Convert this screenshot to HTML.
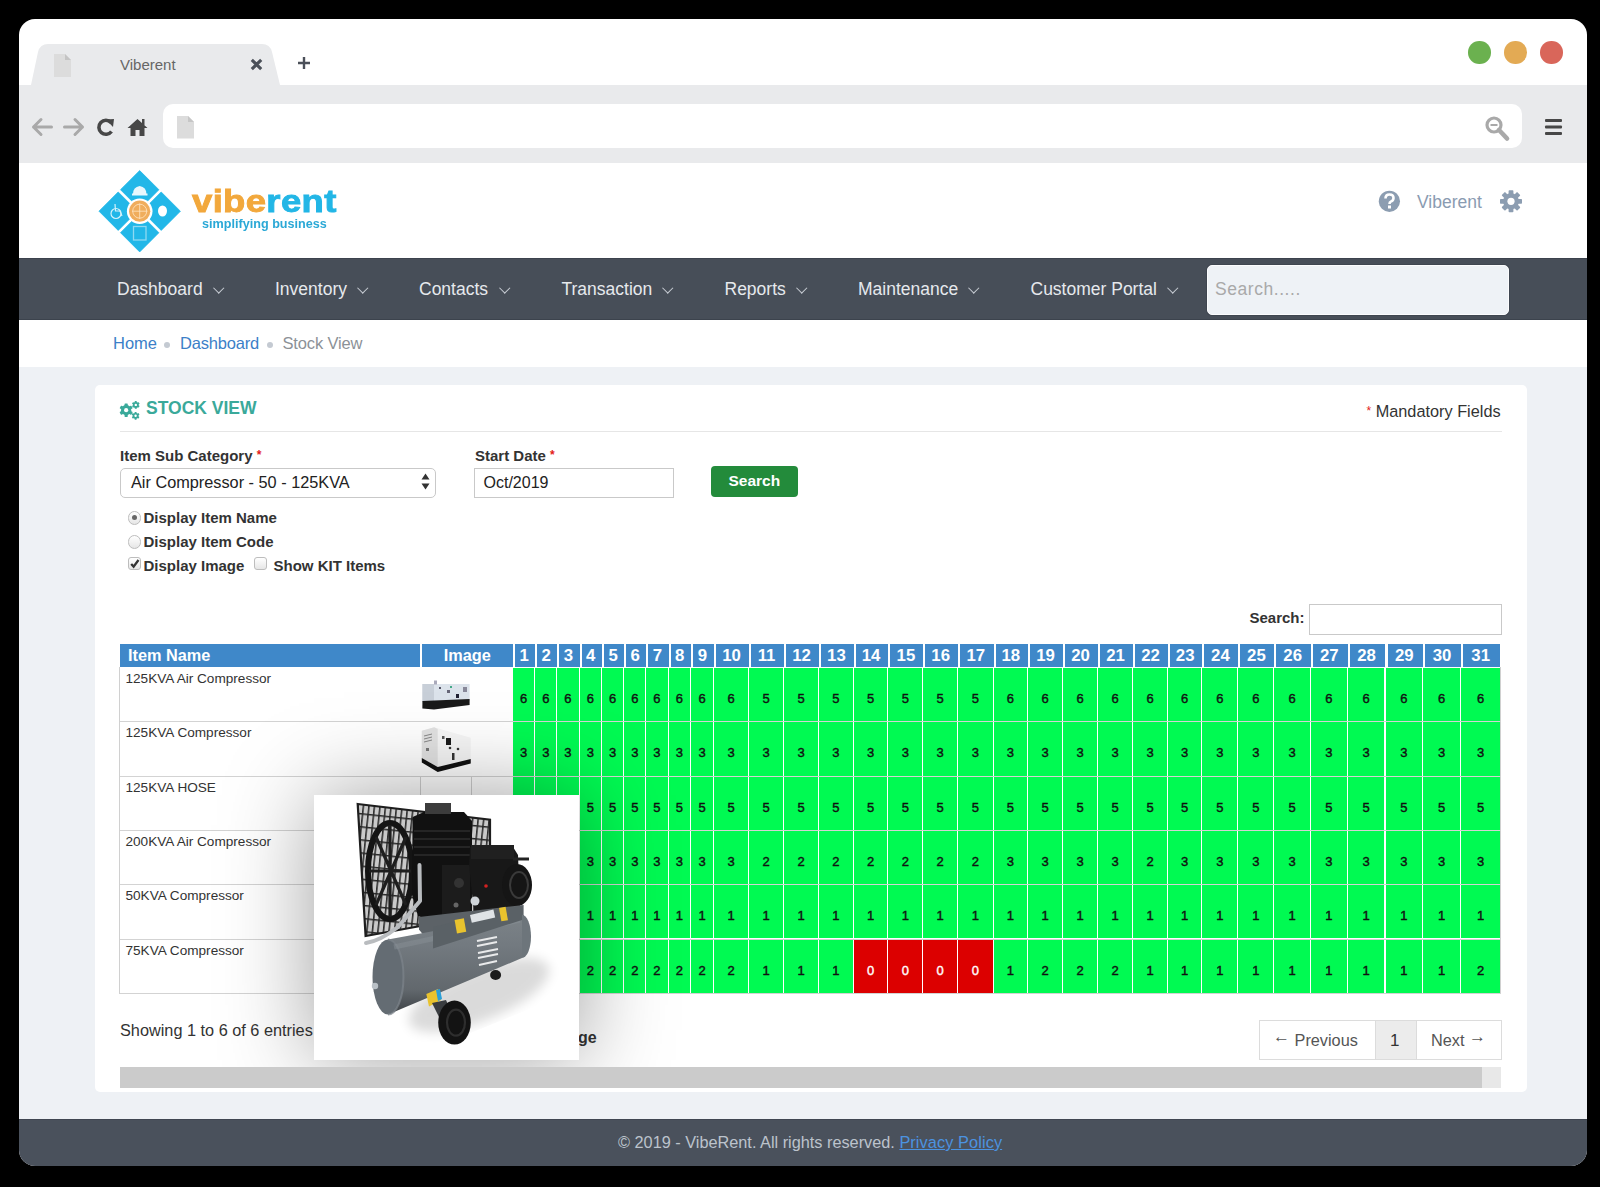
<!DOCTYPE html>
<html><head><meta charset="utf-8">
<style>
*{margin:0;padding:0;box-sizing:border-box}
html,body{width:1600px;height:1187px;overflow:hidden;background:#000;font-family:"Liberation Sans",sans-serif}
.abs{position:absolute}
#win{position:absolute;left:19px;top:19px;width:1568px;height:1147px;background:#fff;border-radius:16px;overflow:hidden}
/* everything inside positioned relative to page: use page coordinates via wrapper */
#pg{position:absolute;left:-19px;top:-19px;width:1600px;height:1187px}
.t{position:absolute;white-space:nowrap}
#toolbar{position:absolute;left:0;top:85px;width:1600px;height:78px;background:#e9eaec}
#addr{position:absolute;left:163px;top:104px;width:1359px;height:44px;background:#fff;border-radius:10px}
#nav{position:absolute;left:0;top:258px;width:1600px;height:62px;background:#474e58;border-top:1.5px solid #3c434d;border-bottom:1.5px solid #3c434d}
.nv{position:absolute;top:279px;font-size:17.5px;color:#e6e9ed;line-height:20px}
.chev{position:absolute;top:284.3px;width:7.5px;height:7.5px;border-right:1.5px solid #c9ced5;border-bottom:1.5px solid #c9ced5;transform:rotate(45deg)}
#content{position:absolute;left:0;top:367px;width:1600px;height:752px;background:#eef1f5}
#panel{position:absolute;left:95px;top:385px;width:1432px;height:707px;background:#fff;border-radius:5px}
#footer{position:absolute;left:0;top:1119px;width:1600px;height:47px;background:#4a515c;border-top:1.5px solid #3f4651}
.lbl{position:absolute;font-size:15px;font-weight:bold;color:#333;line-height:18px}
.req{color:#e31b1b;font-size:12px;position:relative;top:-2px}
.th{position:absolute;top:644px;height:23px;background:#3f88c9;color:#fff;font-weight:bold;font-size:16.8px;line-height:23px}
.td{position:absolute;background:#00fa52;color:#111;font-size:13px;text-align:center;-webkit-text-stroke:0.4px #111}
.td.r{background:#dc0000;color:#fff;-webkit-text-stroke:0.4px #fff}
.hl{position:absolute;left:120px;width:1381px;height:1px;background:#d3d3d3}
.nm{position:absolute;left:125.5px;font-size:13.6px;color:#333;line-height:16px}
</style></head><body>
<div id="win"><div id="pg">
  <!-- tab -->
  <svg class="abs" style="left:0;top:0" width="340" height="90">
    <path d="M31 85 L38 52 Q40 44 48 44 L262 44 Q270 44 272 52 L280 85 Z" fill="#e9eaec"/>
    <path d="M54 54 L65 54 L71 60 L71 77 L54 77 Z" fill="#dcdcdc"/>
    <path d="M65 54 L71 60 L65 60 Z" fill="#c4c4c4"/>
    <path d="M251.8 59.8 L261.2 69.2 M261.2 59.8 L251.8 69.2" stroke="#4b5059" stroke-width="3.1"/>
    <path d="M304 57 L304 69 M298 63 L310 63" stroke="#4b5059" stroke-width="2.4"/>
  </svg>
  <div class="t" style="left:120px;top:56px;font-size:15px;color:#666;line-height:18px">Viberent</div>
  <!-- traffic lights -->
  <div class="abs" style="left:1468px;top:41px;width:22.5px;height:22.5px;border-radius:50%;background:#6bb14f"></div>
  <div class="abs" style="left:1504px;top:41px;width:22.5px;height:22.5px;border-radius:50%;background:#e3aa54"></div>
  <div class="abs" style="left:1540px;top:41px;width:22.5px;height:22.5px;border-radius:50%;background:#d9665a"></div>
  <!-- toolbar -->
  <div id="toolbar"></div>
  <div id="addr"></div>
  <svg class="abs" style="left:0;top:100px" width="220" height="50">
    <!-- back -->
    <path d="M33.5 27 L51.5 27 M41 19.5 L33.5 27 L41 34.5" fill="none" stroke="#a9a9a9" stroke-width="3" stroke-linecap="round" stroke-linejoin="round"/>
    <!-- forward -->
    <path d="M64.5 27 L82.5 27 M75 19.5 L82.5 27 L75 34.5" fill="none" stroke="#a9a9a9" stroke-width="3" stroke-linecap="round" stroke-linejoin="round"/>
    <!-- reload -->
    <path d="M111 22.5 A7 7 0 1 0 111.5 31.5" fill="none" stroke="#474747" stroke-width="3.6"/>
    <path d="M106 19.5 L114 19 L113 27 Z" fill="#474747"/>
    <!-- home -->
    <path d="M127.5 28 L137.5 19 L147.5 28 L144.5 28 L144.5 36 L139.5 36 L139.5 30 L135.5 30 L135.5 36 L130.5 36 L130.5 28 Z" fill="#474747"/>
    <rect x="142" y="19" width="2.5" height="6" fill="#474747"/>
    <!-- file -->
    <path d="M177 16 L188 16 L194 22 L194 38.5 L177 38.5 Z" fill="#dcdcdc"/>
    <path d="M188 16 L194 22 L188 22 Z" fill="#c6c6c6"/>
  </svg>
  <svg class="abs" style="left:1470px;top:100px" width="110" height="50">
    <circle cx="24" cy="25" r="7" fill="none" stroke="#a9a9a9" stroke-width="3.2"/>
    <path d="M20.5 25 L27.5 25" stroke="#a9a9a9" stroke-width="2"/>
    <path d="M29 30 L37 38.5" stroke="#a9a9a9" stroke-width="4.6" stroke-linecap="round"/>
    <rect x="75" y="19" width="17" height="3" rx="1" fill="#474747"/>
    <rect x="75" y="25.5" width="17" height="3" rx="1" fill="#474747"/>
    <rect x="75" y="32" width="17" height="3" rx="1" fill="#474747"/>
  </svg>

  <!-- header logo -->
  <svg class="abs" style="left:90px;top:165px" width="100" height="95" viewBox="90 165 100 95">
    <g fill="#22b7e8" stroke="#22b7e8" stroke-width="0.8" stroke-linejoin="round">
      <path d="M139.7 170.6 L158.9 189.7 L139.7 208.9 L120.5 189.7 Z"/>
      <path d="M99 211.2 L118.2 192 L137.4 211.2 L118.2 230.4 Z"/>
      <path d="M180.4 211.2 L161.2 192 L142 211.2 L161.2 230.4 Z"/>
      <path d="M139.7 251.9 L158.9 232.7 L139.7 213.5 L120.5 232.7 Z"/>
    </g>
    <circle cx="139.7" cy="211.2" r="12.8" fill="#fff"/>
    <circle cx="139.7" cy="211.2" r="10.6" fill="#f0ad5c"/>
    <g fill="none" stroke="#ffe6c4" stroke-width="0.8">
      <circle cx="139.7" cy="211.2" r="7"/>
      <path d="M132 211.2 L147.4 211.2 M139.7 203.5 L139.7 219"/>
    </g>
    <path d="M133 194 Q133 187 139.7 186 Q146.4 187 146.4 194 Z" fill="#e8f7fd"/>
    <rect x="132" y="193.5" width="15.5" height="2" fill="#e8f7fd"/>
    <ellipse cx="162.5" cy="211" rx="4.5" ry="5.5" fill="#fff"/>
    <circle cx="116" cy="213.5" r="5" fill="none" stroke="#d6f2fb" stroke-width="1.2"/>
    <path d="M115 204 L115.5 211 L120 211 L122 216" fill="none" stroke="#d6f2fb" stroke-width="1.2"/>
    <rect x="133.5" y="226.5" width="12.5" height="13.5" fill="none" stroke="#8fd9f2" stroke-width="1.3"/>
  </svg>
  <div class="t" style="left:191.5px;top:180.6px;font-size:32px;font-weight:bold;letter-spacing:0.3px;line-height:40px;transform:scaleX(1.14);transform-origin:0 0"><span style="color:#f2a83c;-webkit-text-stroke:0.9px #f2a83c">vibe</span><span style="color:#22b6e6;-webkit-text-stroke:0.9px #22b6e6">rent</span></div>
  <div class="t" style="left:201.75px;top:216.8px;font-size:13.5px;font-weight:bold;color:#2aa8d6;line-height:14px;transform:scaleX(0.935);transform-origin:0 0">simplifying business</div>

  <!-- header right -->
  <svg class="abs" style="left:1375px;top:188px" width="160" height="28">
    <circle cx="14.4" cy="13.3" r="10.6" fill="#8c9db1"/>
    <path d="M10.5 10.5 Q10.5 6.5 14.5 6.5 Q18.5 6.5 18.5 10 Q18.5 12.5 15.8 13.6 Q14.5 14.2 14.5 16" fill="none" stroke="#fff" stroke-width="2.6"/>
    <rect x="13" y="17.5" width="3" height="3" fill="#fff"/>
    <g transform="translate(136,13.3)" fill="#8c9db1">
      <circle r="8"/>
      <g id="teeth">
        <rect x="-2.4" y="-11" width="4.8" height="22" rx="0.8"/>
        <rect x="-2.4" y="-11" width="4.8" height="22" rx="0.8" transform="rotate(45)"/>
        <rect x="-2.4" y="-11" width="4.8" height="22" rx="0.8" transform="rotate(90)"/>
        <rect x="-2.4" y="-11" width="4.8" height="22" rx="0.8" transform="rotate(135)"/>
      </g>
      <circle r="3.6" fill="#fff"/>
    </g>
  </svg>
  <div class="t" style="left:1417px;top:192px;font-size:17.5px;color:#8a9bb1;line-height:20px">Viberent</div>

  <!-- nav -->
  <div id="nav"></div>
  <div class="nv" style="left:117px">Dashboard</div><div class="chev" style="left:215.3px"></div>
  <div class="nv" style="left:275px">Inventory</div><div class="chev" style="left:358.8px"></div>
  <div class="nv" style="left:419px">Contacts</div><div class="chev" style="left:500.8px"></div>
  <div class="nv" style="left:561.5px">Transaction</div><div class="chev" style="left:663.8px"></div>
  <div class="nv" style="left:724.5px">Reports</div><div class="chev" style="left:797.8px"></div>
  <div class="nv" style="left:858px">Maintenance</div><div class="chev" style="left:970.3px"></div>
  <div class="nv" style="left:1030.5px">Customer Portal</div><div class="chev" style="left:1168.8px"></div>
  <div class="abs" style="left:1207px;top:265px;width:302px;height:50px;background:#eef2f6;border-radius:5px;border:1.5px solid #fbfcfd;box-shadow:0 0 0 1px #3f4650"></div>
  <div class="t" style="left:1215px;top:279px;font-size:17.5px;letter-spacing:0.55px;color:#a9a9a9;line-height:20px">Search.....</div>

  <!-- breadcrumb -->
  <div class="t" style="left:113px;top:334px;font-size:16.5px;color:#3c7fc8;line-height:19px">Home</div>
  <div class="abs" style="left:164px;top:342.2px;width:6px;height:6px;border-radius:50%;background:#c4cad2"></div>
  <div class="t" style="left:180px;top:334px;letter-spacing:-0.2px;font-size:16.5px;color:#3c7fc8;line-height:19px">Dashboard</div>
  <div class="abs" style="left:266.5px;top:342.2px;width:6px;height:6px;border-radius:50%;background:#c4cad2"></div>
  <div class="t" style="left:282.5px;top:334px;letter-spacing:-0.15px;font-size:16.5px;color:#8c9197;line-height:19px">Stock View</div>

  <div id="content"></div>
  <div id="panel"></div>

  <!-- panel title -->
  <svg class="abs" style="left:118px;top:399px" width="26" height="24">
    <g fill="#3aa99a" transform="translate(8.15,11.2)">
      <circle r="5.1"/>
      <rect x="-1.6" y="-6.7" width="3.2" height="13.4" rx="0.6"/>
      <rect x="-1.6" y="-6.7" width="3.2" height="13.4" rx="0.6" transform="rotate(60)"/>
      <rect x="-1.6" y="-6.7" width="3.2" height="13.4" rx="0.6" transform="rotate(120)"/>
      <circle r="2.1" fill="#fff"/>
    </g>
    <g fill="#3aa99a" transform="translate(17.8,5.9)">
      <circle r="2.9"/>
      <rect x="-1" y="-3.9" width="2" height="7.8" rx="0.4"/>
      <rect x="-1" y="-3.9" width="2" height="7.8" rx="0.4" transform="rotate(60)"/>
      <rect x="-1" y="-3.9" width="2" height="7.8" rx="0.4" transform="rotate(120)"/>
      <circle r="1.2" fill="#fff"/>
    </g>
    <g fill="#3aa99a" transform="translate(17.6,16.8)">
      <circle r="2.9"/>
      <rect x="-1" y="-3.9" width="2" height="7.8" rx="0.4"/>
      <rect x="-1" y="-3.9" width="2" height="7.8" rx="0.4" transform="rotate(60)"/>
      <rect x="-1" y="-3.9" width="2" height="7.8" rx="0.4" transform="rotate(120)"/>
      <circle r="1.2" fill="#fff"/>
    </g>
  </svg>
  <div class="t" style="left:146px;top:398px;font-size:17.5px;font-weight:bold;color:#3aa99a;line-height:20px">STOCK VIEW</div>
  <div class="t" style="left:1366.5px;top:402px;font-size:16.3px;color:#333;line-height:19px"><span class="req">*</span> Mandatory Fields</div>
  <div class="abs" style="left:120px;top:431px;width:1382px;height:1px;background:#e6e6e6"></div>

  <!-- form -->
  <div class="lbl" style="left:120px;top:447px">Item Sub Category <span class="req">*</span></div>
  <div class="abs" style="left:120px;top:467.5px;width:316px;height:30px;border:1px solid #c9c9c9;border-radius:5px;background:#fff"></div>
  <div class="t" style="left:131px;top:473px;font-size:16.3px;color:#222;line-height:19px">Air Compressor - 50 - 125KVA</div>
  <svg class="abs" style="left:420px;top:472px" width="12" height="20">
    <path d="M1.5 7.5 L5.5 1.5 L9.5 7.5 Z M1.5 11.5 L5.5 17.5 L9.5 11.5 Z" fill="#333"/>
  </svg>
  <div class="lbl" style="left:475px;top:447px">Start Date <span class="req">*</span></div>
  <div class="abs" style="left:474px;top:467.5px;width:200px;height:30px;border:1px solid #c9c9c9;background:#fff"></div>
  <div class="t" style="left:483.5px;top:473px;font-size:16px;color:#222;line-height:19px">Oct/2019</div>
  <div class="abs" style="left:711px;top:466px;width:87px;height:31px;background:#238b3b;border-radius:4px"></div>
  <div class="t" style="left:728.5px;top:472px;font-size:15.5px;font-weight:bold;color:#fff;line-height:18px">Search</div>

  <!-- radios -->
  <div class="abs" style="left:127.5px;top:511px;width:13.5px;height:13.5px;border-radius:50%;border:1.5px solid #bdbdbd;background:linear-gradient(#fff,#e6e6e6)"></div>
  <div class="abs" style="left:131.6px;top:515.1px;width:5.3px;height:5.3px;border-radius:50%;background:#666"></div>
  <div class="lbl" style="left:143.5px;top:509px">Display Item Name</div>
  <div class="abs" style="left:127.5px;top:535px;width:13.5px;height:13.5px;border-radius:50%;border:1.5px solid #bdbdbd;background:linear-gradient(#fff,#e6e6e6)"></div>
  <div class="lbl" style="left:143.5px;top:533px">Display Item Code</div>
  <div class="abs" style="left:128px;top:557px;width:13px;height:13px;border-radius:3px;border:1.3px solid #bdbdbd;background:linear-gradient(#fff,#e6e6e6)"></div>
  <svg class="abs" style="left:128px;top:556px" width="14" height="14"><path d="M3.2 8 L5.6 10.6 L10.5 4" fill="none" stroke="#333" stroke-width="2.3"/></svg>
  <div class="lbl" style="left:143.5px;top:557px">Display Image</div>
  <div class="abs" style="left:254px;top:557px;width:13px;height:13px;border-radius:3px;border:1.3px solid #bdbdbd;background:linear-gradient(#fff,#e6e6e6)"></div>
  <div class="lbl" style="left:273.5px;top:557px">Show KIT Items</div>

  <!-- table search -->
  <div class="lbl" style="left:1249.5px;top:609px">Search:</div>
  <div class="abs" style="left:1309px;top:604px;width:193px;height:30.5px;border:1px solid #c9c9c9;background:#fff"></div>

  <!-- table -->
  <div class="abs" style="left:119px;top:667px;width:1px;height:327px;background:#d0d0d0"></div>
  <div class="abs" style="left:1500px;top:667px;width:1px;height:327px;background:#d0d0d0"></div>
<div class="th" style="left:120.0px;width:299.5px;text-align:left;padding-left:8px;font-size:16.3px;">Item Name</div>
<div class="th" style="left:421.5px;width:91.5px;text-align:center;font-size:16.3px;">Image</div>
<div class="th" style="left:515.0px;width:20.2px;text-align:center;padding-right:2px;">1</div>
<div class="th" style="left:537.2px;width:20.2px;text-align:center;padding-right:2px;">2</div>
<div class="th" style="left:559.4px;width:20.2px;text-align:center;padding-right:2px;">3</div>
<div class="th" style="left:581.6px;width:20.4px;text-align:center;padding-right:2px;">4</div>
<div class="th" style="left:604.0px;width:20.2px;text-align:center;padding-right:2px;">5</div>
<div class="th" style="left:626.2px;width:20.2px;text-align:center;padding-right:2px;">6</div>
<div class="th" style="left:648.4px;width:20.2px;text-align:center;padding-right:2px;">7</div>
<div class="th" style="left:670.6px;width:20.4px;text-align:center;padding-right:2px;">8</div>
<div class="th" style="left:693.0px;width:21.0px;text-align:center;padding-right:2px;">9</div>
<div class="th" style="left:716.0px;width:33.0px;text-align:center;padding-right:2px;">10</div>
<div class="th" style="left:751.0px;width:33.0px;text-align:center;padding-right:2px;">11</div>
<div class="th" style="left:786.0px;width:33.0px;text-align:center;padding-right:2px;">12</div>
<div class="th" style="left:821.0px;width:32.8px;text-align:center;padding-right:2px;">13</div>
<div class="th" style="left:855.8px;width:32.6px;text-align:center;padding-right:2px;">14</div>
<div class="th" style="left:890.4px;width:33.0px;text-align:center;padding-right:2px;">15</div>
<div class="th" style="left:925.4px;width:32.6px;text-align:center;padding-right:2px;">16</div>
<div class="th" style="left:960.0px;width:33.6px;text-align:center;padding-right:2px;">17</div>
<div class="th" style="left:995.6px;width:32.4px;text-align:center;padding-right:2px;">18</div>
<div class="th" style="left:1030.0px;width:33.0px;text-align:center;padding-right:2px;">19</div>
<div class="th" style="left:1065.0px;width:33.0px;text-align:center;padding-right:2px;">20</div>
<div class="th" style="left:1100.0px;width:33.0px;text-align:center;padding-right:2px;">21</div>
<div class="th" style="left:1135.0px;width:33.0px;text-align:center;padding-right:2px;">22</div>
<div class="th" style="left:1170.0px;width:32.4px;text-align:center;padding-right:2px;">23</div>
<div class="th" style="left:1204.4px;width:34.0px;text-align:center;padding-right:2px;">24</div>
<div class="th" style="left:1240.4px;width:34.0px;text-align:center;padding-right:2px;">25</div>
<div class="th" style="left:1276.4px;width:34.6px;text-align:center;padding-right:2px;">26</div>
<div class="th" style="left:1313.0px;width:34.7px;text-align:center;padding-right:2px;">27</div>
<div class="th" style="left:1349.7px;width:35.8px;text-align:center;padding-right:2px;">28</div>
<div class="th" style="left:1387.5px;width:35.7px;text-align:center;padding-right:2px;">29</div>
<div class="th" style="left:1425.2px;width:35.8px;text-align:center;padding-right:2px;">30</div>
<div class="th" style="left:1463.0px;width:37.3px;text-align:center;padding-right:2px;">31</div>
<div class="nm" style="top:671.0px">125KVA Air Compressor</div>
<div class="td" style="left:513.0px;top:668.0px;width:21.2px;height:53.3px;line-height:62.3px">6</div>
<div class="td" style="left:535.2px;top:668.0px;width:21.2px;height:53.3px;line-height:62.3px">6</div>
<div class="td" style="left:557.4px;top:668.0px;width:21.2px;height:53.3px;line-height:62.3px">6</div>
<div class="td" style="left:579.6px;top:668.0px;width:21.4px;height:53.3px;line-height:62.3px">6</div>
<div class="td" style="left:602.0px;top:668.0px;width:21.2px;height:53.3px;line-height:62.3px">6</div>
<div class="td" style="left:624.2px;top:668.0px;width:21.2px;height:53.3px;line-height:62.3px">6</div>
<div class="td" style="left:646.4px;top:668.0px;width:21.2px;height:53.3px;line-height:62.3px">6</div>
<div class="td" style="left:668.6px;top:668.0px;width:21.4px;height:53.3px;line-height:62.3px">6</div>
<div class="td" style="left:691.0px;top:668.0px;width:22.0px;height:53.3px;line-height:62.3px">6</div>
<div class="td" style="left:714.0px;top:668.0px;width:34.0px;height:53.3px;line-height:62.3px">6</div>
<div class="td" style="left:749.0px;top:668.0px;width:34.0px;height:53.3px;line-height:62.3px">5</div>
<div class="td" style="left:784.0px;top:668.0px;width:34.0px;height:53.3px;line-height:62.3px">5</div>
<div class="td" style="left:819.0px;top:668.0px;width:33.8px;height:53.3px;line-height:62.3px">5</div>
<div class="td" style="left:853.8px;top:668.0px;width:33.6px;height:53.3px;line-height:62.3px">5</div>
<div class="td" style="left:888.4px;top:668.0px;width:34.0px;height:53.3px;line-height:62.3px">5</div>
<div class="td" style="left:923.4px;top:668.0px;width:33.6px;height:53.3px;line-height:62.3px">5</div>
<div class="td" style="left:958.0px;top:668.0px;width:34.6px;height:53.3px;line-height:62.3px">5</div>
<div class="td" style="left:993.6px;top:668.0px;width:33.4px;height:53.3px;line-height:62.3px">6</div>
<div class="td" style="left:1028.0px;top:668.0px;width:34.0px;height:53.3px;line-height:62.3px">6</div>
<div class="td" style="left:1063.0px;top:668.0px;width:34.0px;height:53.3px;line-height:62.3px">6</div>
<div class="td" style="left:1098.0px;top:668.0px;width:34.0px;height:53.3px;line-height:62.3px">6</div>
<div class="td" style="left:1133.0px;top:668.0px;width:34.0px;height:53.3px;line-height:62.3px">6</div>
<div class="td" style="left:1168.0px;top:668.0px;width:33.4px;height:53.3px;line-height:62.3px">6</div>
<div class="td" style="left:1202.4px;top:668.0px;width:35.0px;height:53.3px;line-height:62.3px">6</div>
<div class="td" style="left:1238.4px;top:668.0px;width:35.0px;height:53.3px;line-height:62.3px">6</div>
<div class="td" style="left:1274.4px;top:668.0px;width:35.6px;height:53.3px;line-height:62.3px">6</div>
<div class="td" style="left:1311.0px;top:668.0px;width:35.7px;height:53.3px;line-height:62.3px">6</div>
<div class="td" style="left:1347.7px;top:668.0px;width:36.8px;height:53.3px;line-height:62.3px">6</div>
<div class="td" style="left:1385.5px;top:668.0px;width:36.7px;height:53.3px;line-height:62.3px">6</div>
<div class="td" style="left:1423.2px;top:668.0px;width:36.8px;height:53.3px;line-height:62.3px">6</div>
<div class="td" style="left:1461.0px;top:668.0px;width:39.3px;height:53.3px;line-height:62.3px">6</div>
<div class="hl" style="top:721.3px"></div>
<div class="nm" style="top:725.3px">125KVA Compressor</div>
<div class="td" style="left:513.0px;top:722.3px;width:21.2px;height:53.3px;line-height:62.3px">3</div>
<div class="td" style="left:535.2px;top:722.3px;width:21.2px;height:53.3px;line-height:62.3px">3</div>
<div class="td" style="left:557.4px;top:722.3px;width:21.2px;height:53.3px;line-height:62.3px">3</div>
<div class="td" style="left:579.6px;top:722.3px;width:21.4px;height:53.3px;line-height:62.3px">3</div>
<div class="td" style="left:602.0px;top:722.3px;width:21.2px;height:53.3px;line-height:62.3px">3</div>
<div class="td" style="left:624.2px;top:722.3px;width:21.2px;height:53.3px;line-height:62.3px">3</div>
<div class="td" style="left:646.4px;top:722.3px;width:21.2px;height:53.3px;line-height:62.3px">3</div>
<div class="td" style="left:668.6px;top:722.3px;width:21.4px;height:53.3px;line-height:62.3px">3</div>
<div class="td" style="left:691.0px;top:722.3px;width:22.0px;height:53.3px;line-height:62.3px">3</div>
<div class="td" style="left:714.0px;top:722.3px;width:34.0px;height:53.3px;line-height:62.3px">3</div>
<div class="td" style="left:749.0px;top:722.3px;width:34.0px;height:53.3px;line-height:62.3px">3</div>
<div class="td" style="left:784.0px;top:722.3px;width:34.0px;height:53.3px;line-height:62.3px">3</div>
<div class="td" style="left:819.0px;top:722.3px;width:33.8px;height:53.3px;line-height:62.3px">3</div>
<div class="td" style="left:853.8px;top:722.3px;width:33.6px;height:53.3px;line-height:62.3px">3</div>
<div class="td" style="left:888.4px;top:722.3px;width:34.0px;height:53.3px;line-height:62.3px">3</div>
<div class="td" style="left:923.4px;top:722.3px;width:33.6px;height:53.3px;line-height:62.3px">3</div>
<div class="td" style="left:958.0px;top:722.3px;width:34.6px;height:53.3px;line-height:62.3px">3</div>
<div class="td" style="left:993.6px;top:722.3px;width:33.4px;height:53.3px;line-height:62.3px">3</div>
<div class="td" style="left:1028.0px;top:722.3px;width:34.0px;height:53.3px;line-height:62.3px">3</div>
<div class="td" style="left:1063.0px;top:722.3px;width:34.0px;height:53.3px;line-height:62.3px">3</div>
<div class="td" style="left:1098.0px;top:722.3px;width:34.0px;height:53.3px;line-height:62.3px">3</div>
<div class="td" style="left:1133.0px;top:722.3px;width:34.0px;height:53.3px;line-height:62.3px">3</div>
<div class="td" style="left:1168.0px;top:722.3px;width:33.4px;height:53.3px;line-height:62.3px">3</div>
<div class="td" style="left:1202.4px;top:722.3px;width:35.0px;height:53.3px;line-height:62.3px">3</div>
<div class="td" style="left:1238.4px;top:722.3px;width:35.0px;height:53.3px;line-height:62.3px">3</div>
<div class="td" style="left:1274.4px;top:722.3px;width:35.6px;height:53.3px;line-height:62.3px">3</div>
<div class="td" style="left:1311.0px;top:722.3px;width:35.7px;height:53.3px;line-height:62.3px">3</div>
<div class="td" style="left:1347.7px;top:722.3px;width:36.8px;height:53.3px;line-height:62.3px">3</div>
<div class="td" style="left:1385.5px;top:722.3px;width:36.7px;height:53.3px;line-height:62.3px">3</div>
<div class="td" style="left:1423.2px;top:722.3px;width:36.8px;height:53.3px;line-height:62.3px">3</div>
<div class="td" style="left:1461.0px;top:722.3px;width:39.3px;height:53.3px;line-height:62.3px">3</div>
<div class="hl" style="top:775.6px"></div>
<div class="nm" style="top:779.6px">125KVA HOSE</div>
<div class="td" style="left:513.0px;top:776.6px;width:21.2px;height:53.3px;line-height:62.3px">5</div>
<div class="td" style="left:535.2px;top:776.6px;width:21.2px;height:53.3px;line-height:62.3px">5</div>
<div class="td" style="left:557.4px;top:776.6px;width:21.2px;height:53.3px;line-height:62.3px">5</div>
<div class="td" style="left:579.6px;top:776.6px;width:21.4px;height:53.3px;line-height:62.3px">5</div>
<div class="td" style="left:602.0px;top:776.6px;width:21.2px;height:53.3px;line-height:62.3px">5</div>
<div class="td" style="left:624.2px;top:776.6px;width:21.2px;height:53.3px;line-height:62.3px">5</div>
<div class="td" style="left:646.4px;top:776.6px;width:21.2px;height:53.3px;line-height:62.3px">5</div>
<div class="td" style="left:668.6px;top:776.6px;width:21.4px;height:53.3px;line-height:62.3px">5</div>
<div class="td" style="left:691.0px;top:776.6px;width:22.0px;height:53.3px;line-height:62.3px">5</div>
<div class="td" style="left:714.0px;top:776.6px;width:34.0px;height:53.3px;line-height:62.3px">5</div>
<div class="td" style="left:749.0px;top:776.6px;width:34.0px;height:53.3px;line-height:62.3px">5</div>
<div class="td" style="left:784.0px;top:776.6px;width:34.0px;height:53.3px;line-height:62.3px">5</div>
<div class="td" style="left:819.0px;top:776.6px;width:33.8px;height:53.3px;line-height:62.3px">5</div>
<div class="td" style="left:853.8px;top:776.6px;width:33.6px;height:53.3px;line-height:62.3px">5</div>
<div class="td" style="left:888.4px;top:776.6px;width:34.0px;height:53.3px;line-height:62.3px">5</div>
<div class="td" style="left:923.4px;top:776.6px;width:33.6px;height:53.3px;line-height:62.3px">5</div>
<div class="td" style="left:958.0px;top:776.6px;width:34.6px;height:53.3px;line-height:62.3px">5</div>
<div class="td" style="left:993.6px;top:776.6px;width:33.4px;height:53.3px;line-height:62.3px">5</div>
<div class="td" style="left:1028.0px;top:776.6px;width:34.0px;height:53.3px;line-height:62.3px">5</div>
<div class="td" style="left:1063.0px;top:776.6px;width:34.0px;height:53.3px;line-height:62.3px">5</div>
<div class="td" style="left:1098.0px;top:776.6px;width:34.0px;height:53.3px;line-height:62.3px">5</div>
<div class="td" style="left:1133.0px;top:776.6px;width:34.0px;height:53.3px;line-height:62.3px">5</div>
<div class="td" style="left:1168.0px;top:776.6px;width:33.4px;height:53.3px;line-height:62.3px">5</div>
<div class="td" style="left:1202.4px;top:776.6px;width:35.0px;height:53.3px;line-height:62.3px">5</div>
<div class="td" style="left:1238.4px;top:776.6px;width:35.0px;height:53.3px;line-height:62.3px">5</div>
<div class="td" style="left:1274.4px;top:776.6px;width:35.6px;height:53.3px;line-height:62.3px">5</div>
<div class="td" style="left:1311.0px;top:776.6px;width:35.7px;height:53.3px;line-height:62.3px">5</div>
<div class="td" style="left:1347.7px;top:776.6px;width:36.8px;height:53.3px;line-height:62.3px">5</div>
<div class="td" style="left:1385.5px;top:776.6px;width:36.7px;height:53.3px;line-height:62.3px">5</div>
<div class="td" style="left:1423.2px;top:776.6px;width:36.8px;height:53.3px;line-height:62.3px">5</div>
<div class="td" style="left:1461.0px;top:776.6px;width:39.3px;height:53.3px;line-height:62.3px">5</div>
<div class="hl" style="top:829.9px"></div>
<div class="nm" style="top:833.9px">200KVA Air Compressor</div>
<div class="td" style="left:513.0px;top:830.9px;width:21.2px;height:53.3px;line-height:62.3px">3</div>
<div class="td" style="left:535.2px;top:830.9px;width:21.2px;height:53.3px;line-height:62.3px">3</div>
<div class="td" style="left:557.4px;top:830.9px;width:21.2px;height:53.3px;line-height:62.3px">3</div>
<div class="td" style="left:579.6px;top:830.9px;width:21.4px;height:53.3px;line-height:62.3px">3</div>
<div class="td" style="left:602.0px;top:830.9px;width:21.2px;height:53.3px;line-height:62.3px">3</div>
<div class="td" style="left:624.2px;top:830.9px;width:21.2px;height:53.3px;line-height:62.3px">3</div>
<div class="td" style="left:646.4px;top:830.9px;width:21.2px;height:53.3px;line-height:62.3px">3</div>
<div class="td" style="left:668.6px;top:830.9px;width:21.4px;height:53.3px;line-height:62.3px">3</div>
<div class="td" style="left:691.0px;top:830.9px;width:22.0px;height:53.3px;line-height:62.3px">3</div>
<div class="td" style="left:714.0px;top:830.9px;width:34.0px;height:53.3px;line-height:62.3px">3</div>
<div class="td" style="left:749.0px;top:830.9px;width:34.0px;height:53.3px;line-height:62.3px">2</div>
<div class="td" style="left:784.0px;top:830.9px;width:34.0px;height:53.3px;line-height:62.3px">2</div>
<div class="td" style="left:819.0px;top:830.9px;width:33.8px;height:53.3px;line-height:62.3px">2</div>
<div class="td" style="left:853.8px;top:830.9px;width:33.6px;height:53.3px;line-height:62.3px">2</div>
<div class="td" style="left:888.4px;top:830.9px;width:34.0px;height:53.3px;line-height:62.3px">2</div>
<div class="td" style="left:923.4px;top:830.9px;width:33.6px;height:53.3px;line-height:62.3px">2</div>
<div class="td" style="left:958.0px;top:830.9px;width:34.6px;height:53.3px;line-height:62.3px">2</div>
<div class="td" style="left:993.6px;top:830.9px;width:33.4px;height:53.3px;line-height:62.3px">3</div>
<div class="td" style="left:1028.0px;top:830.9px;width:34.0px;height:53.3px;line-height:62.3px">3</div>
<div class="td" style="left:1063.0px;top:830.9px;width:34.0px;height:53.3px;line-height:62.3px">3</div>
<div class="td" style="left:1098.0px;top:830.9px;width:34.0px;height:53.3px;line-height:62.3px">3</div>
<div class="td" style="left:1133.0px;top:830.9px;width:34.0px;height:53.3px;line-height:62.3px">2</div>
<div class="td" style="left:1168.0px;top:830.9px;width:33.4px;height:53.3px;line-height:62.3px">3</div>
<div class="td" style="left:1202.4px;top:830.9px;width:35.0px;height:53.3px;line-height:62.3px">3</div>
<div class="td" style="left:1238.4px;top:830.9px;width:35.0px;height:53.3px;line-height:62.3px">3</div>
<div class="td" style="left:1274.4px;top:830.9px;width:35.6px;height:53.3px;line-height:62.3px">3</div>
<div class="td" style="left:1311.0px;top:830.9px;width:35.7px;height:53.3px;line-height:62.3px">3</div>
<div class="td" style="left:1347.7px;top:830.9px;width:36.8px;height:53.3px;line-height:62.3px">3</div>
<div class="td" style="left:1385.5px;top:830.9px;width:36.7px;height:53.3px;line-height:62.3px">3</div>
<div class="td" style="left:1423.2px;top:830.9px;width:36.8px;height:53.3px;line-height:62.3px">3</div>
<div class="td" style="left:1461.0px;top:830.9px;width:39.3px;height:53.3px;line-height:62.3px">3</div>
<div class="hl" style="top:884.2px"></div>
<div class="nm" style="top:888.2px">50KVA Compressor</div>
<div class="td" style="left:513.0px;top:885.2px;width:21.2px;height:53.3px;line-height:62.3px">1</div>
<div class="td" style="left:535.2px;top:885.2px;width:21.2px;height:53.3px;line-height:62.3px">1</div>
<div class="td" style="left:557.4px;top:885.2px;width:21.2px;height:53.3px;line-height:62.3px">1</div>
<div class="td" style="left:579.6px;top:885.2px;width:21.4px;height:53.3px;line-height:62.3px">1</div>
<div class="td" style="left:602.0px;top:885.2px;width:21.2px;height:53.3px;line-height:62.3px">1</div>
<div class="td" style="left:624.2px;top:885.2px;width:21.2px;height:53.3px;line-height:62.3px">1</div>
<div class="td" style="left:646.4px;top:885.2px;width:21.2px;height:53.3px;line-height:62.3px">1</div>
<div class="td" style="left:668.6px;top:885.2px;width:21.4px;height:53.3px;line-height:62.3px">1</div>
<div class="td" style="left:691.0px;top:885.2px;width:22.0px;height:53.3px;line-height:62.3px">1</div>
<div class="td" style="left:714.0px;top:885.2px;width:34.0px;height:53.3px;line-height:62.3px">1</div>
<div class="td" style="left:749.0px;top:885.2px;width:34.0px;height:53.3px;line-height:62.3px">1</div>
<div class="td" style="left:784.0px;top:885.2px;width:34.0px;height:53.3px;line-height:62.3px">1</div>
<div class="td" style="left:819.0px;top:885.2px;width:33.8px;height:53.3px;line-height:62.3px">1</div>
<div class="td" style="left:853.8px;top:885.2px;width:33.6px;height:53.3px;line-height:62.3px">1</div>
<div class="td" style="left:888.4px;top:885.2px;width:34.0px;height:53.3px;line-height:62.3px">1</div>
<div class="td" style="left:923.4px;top:885.2px;width:33.6px;height:53.3px;line-height:62.3px">1</div>
<div class="td" style="left:958.0px;top:885.2px;width:34.6px;height:53.3px;line-height:62.3px">1</div>
<div class="td" style="left:993.6px;top:885.2px;width:33.4px;height:53.3px;line-height:62.3px">1</div>
<div class="td" style="left:1028.0px;top:885.2px;width:34.0px;height:53.3px;line-height:62.3px">1</div>
<div class="td" style="left:1063.0px;top:885.2px;width:34.0px;height:53.3px;line-height:62.3px">1</div>
<div class="td" style="left:1098.0px;top:885.2px;width:34.0px;height:53.3px;line-height:62.3px">1</div>
<div class="td" style="left:1133.0px;top:885.2px;width:34.0px;height:53.3px;line-height:62.3px">1</div>
<div class="td" style="left:1168.0px;top:885.2px;width:33.4px;height:53.3px;line-height:62.3px">1</div>
<div class="td" style="left:1202.4px;top:885.2px;width:35.0px;height:53.3px;line-height:62.3px">1</div>
<div class="td" style="left:1238.4px;top:885.2px;width:35.0px;height:53.3px;line-height:62.3px">1</div>
<div class="td" style="left:1274.4px;top:885.2px;width:35.6px;height:53.3px;line-height:62.3px">1</div>
<div class="td" style="left:1311.0px;top:885.2px;width:35.7px;height:53.3px;line-height:62.3px">1</div>
<div class="td" style="left:1347.7px;top:885.2px;width:36.8px;height:53.3px;line-height:62.3px">1</div>
<div class="td" style="left:1385.5px;top:885.2px;width:36.7px;height:53.3px;line-height:62.3px">1</div>
<div class="td" style="left:1423.2px;top:885.2px;width:36.8px;height:53.3px;line-height:62.3px">1</div>
<div class="td" style="left:1461.0px;top:885.2px;width:39.3px;height:53.3px;line-height:62.3px">1</div>
<div class="hl" style="top:938.5px"></div>
<div class="nm" style="top:942.5px">75KVA Compressor</div>
<div class="td" style="left:513.0px;top:939.5px;width:21.2px;height:53.3px;line-height:62.3px">2</div>
<div class="td" style="left:535.2px;top:939.5px;width:21.2px;height:53.3px;line-height:62.3px">2</div>
<div class="td" style="left:557.4px;top:939.5px;width:21.2px;height:53.3px;line-height:62.3px">2</div>
<div class="td" style="left:579.6px;top:939.5px;width:21.4px;height:53.3px;line-height:62.3px">2</div>
<div class="td" style="left:602.0px;top:939.5px;width:21.2px;height:53.3px;line-height:62.3px">2</div>
<div class="td" style="left:624.2px;top:939.5px;width:21.2px;height:53.3px;line-height:62.3px">2</div>
<div class="td" style="left:646.4px;top:939.5px;width:21.2px;height:53.3px;line-height:62.3px">2</div>
<div class="td" style="left:668.6px;top:939.5px;width:21.4px;height:53.3px;line-height:62.3px">2</div>
<div class="td" style="left:691.0px;top:939.5px;width:22.0px;height:53.3px;line-height:62.3px">2</div>
<div class="td" style="left:714.0px;top:939.5px;width:34.0px;height:53.3px;line-height:62.3px">2</div>
<div class="td" style="left:749.0px;top:939.5px;width:34.0px;height:53.3px;line-height:62.3px">1</div>
<div class="td" style="left:784.0px;top:939.5px;width:34.0px;height:53.3px;line-height:62.3px">1</div>
<div class="td" style="left:819.0px;top:939.5px;width:33.8px;height:53.3px;line-height:62.3px">1</div>
<div class="td r" style="left:853.8px;top:939.5px;width:33.6px;height:53.3px;line-height:62.3px">0</div>
<div class="td r" style="left:888.4px;top:939.5px;width:34.0px;height:53.3px;line-height:62.3px">0</div>
<div class="td r" style="left:923.4px;top:939.5px;width:33.6px;height:53.3px;line-height:62.3px">0</div>
<div class="td r" style="left:958.0px;top:939.5px;width:34.6px;height:53.3px;line-height:62.3px">0</div>
<div class="td" style="left:993.6px;top:939.5px;width:33.4px;height:53.3px;line-height:62.3px">1</div>
<div class="td" style="left:1028.0px;top:939.5px;width:34.0px;height:53.3px;line-height:62.3px">2</div>
<div class="td" style="left:1063.0px;top:939.5px;width:34.0px;height:53.3px;line-height:62.3px">2</div>
<div class="td" style="left:1098.0px;top:939.5px;width:34.0px;height:53.3px;line-height:62.3px">2</div>
<div class="td" style="left:1133.0px;top:939.5px;width:34.0px;height:53.3px;line-height:62.3px">1</div>
<div class="td" style="left:1168.0px;top:939.5px;width:33.4px;height:53.3px;line-height:62.3px">1</div>
<div class="td" style="left:1202.4px;top:939.5px;width:35.0px;height:53.3px;line-height:62.3px">1</div>
<div class="td" style="left:1238.4px;top:939.5px;width:35.0px;height:53.3px;line-height:62.3px">1</div>
<div class="td" style="left:1274.4px;top:939.5px;width:35.6px;height:53.3px;line-height:62.3px">1</div>
<div class="td" style="left:1311.0px;top:939.5px;width:35.7px;height:53.3px;line-height:62.3px">1</div>
<div class="td" style="left:1347.7px;top:939.5px;width:36.8px;height:53.3px;line-height:62.3px">1</div>
<div class="td" style="left:1385.5px;top:939.5px;width:36.7px;height:53.3px;line-height:62.3px">1</div>
<div class="td" style="left:1423.2px;top:939.5px;width:36.8px;height:53.3px;line-height:62.3px">1</div>
<div class="td" style="left:1461.0px;top:939.5px;width:39.3px;height:53.3px;line-height:62.3px">2</div>
<div class="hl" style="top:992.8px"></div>
  <!-- thumbnails -->
  <svg class="abs" style="left:420px;top:678px" width="56" height="100">
    <path d="M2.4 6 L49.6 6 L49.6 21.5 L2.4 23.5 Z" fill="#dce3eb"/>
    <path d="M2.4 6 L14 6 L14 23 L2.4 23.5 Z" fill="#c8cfd8"/>
    <rect x="14" y="2.5" width="3" height="4" fill="#aab"/>
    <path d="M2.4 23 L49.6 21 L49.6 27 L14 31.5 L2.4 30.5 Z" fill="#1a1a1a"/>
    <rect x="19" y="9" width="2" height="2" fill="#556"/>
    <rect x="27" y="12" width="3" height="3" fill="#667"/>
    <rect x="36" y="16" width="3" height="4" fill="#223"/>
    <rect x="43" y="9" width="4" height="5" fill="#889"/>
    <rect x="30" y="8" width="2" height="2" fill="#4a8"/>
    <path d="M1.8 52.8 L14.2 49.2 L50.75 59.8 L50.75 81 L17.7 89 L1.8 80 Z" fill="#f6f6f6"/>
    <path d="M1.8 52.8 L14.2 49.2 L17.7 51 L17.7 89 L1.8 80 Z" fill="#e2e2e2"/>
    <path d="M1.8 80 L17.7 89 L50.75 81 L50.75 85.5 L17.7 94 L1.8 84.6 Z" fill="#111"/>
    <path d="M4 58 L12 56 M4 61 L12 59 M4 64 L12 62" stroke="#888" stroke-width="1"/>
    <rect x="26" y="60" width="5" height="7" fill="#1b1b1b"/>
    <rect x="22" y="58" width="2.5" height="3" fill="#555"/>
    <rect x="32" y="75" width="2.5" height="7" fill="#333"/>
    <circle cx="30" cy="70" r="1.3" fill="#333"/>
    <circle cx="38" cy="71" r="1.3" fill="#333"/>
    <rect x="6" y="70" width="3" height="3" fill="#777"/>
  </svg>
  <div class="abs" style="left:420px;top:776.6px;width:52px;height:53.5px;border-left:1px solid #d0d0d0;border-right:1px solid #d0d0d0"></div>

  <!-- below table -->
  <div class="t" style="left:120px;top:1021px;font-size:16.3px;color:#333;line-height:19px">Showing 1 to 6 of 6 entries</div>
  <div class="t" style="left:558.5px;top:1028px;font-size:16px;font-weight:bold;color:#333;line-height:19px">Page</div>
  <div class="abs" style="left:1259px;top:1020px;width:243px;height:40px;border:1px solid #dcdcdc;background:#fff"></div>
  <div class="abs" style="left:1375px;top:1021px;width:41.5px;height:38px;background:#ececec;border-left:1px solid #dcdcdc;border-right:1px solid #dcdcdc"></div>
  <div class="t" style="left:1273px;top:1030.5px;font-size:16.3px;color:#555;line-height:19px"><span style="position:relative;top:-3.5px;font-size:17px">←</span> Previous</div>
  <div class="t" style="left:1390px;top:1030.5px;font-size:17px;color:#333;line-height:19px">1</div>
  <div class="t" style="left:1431px;top:1030.5px;font-size:16.3px;color:#555;line-height:19px">Next <span style="position:relative;top:-3.5px;font-size:17px">→</span></div>
  <div class="abs" style="left:120px;top:1066.5px;width:1381px;height:21.5px;background:#e8e8e8"></div>
  <div class="abs" style="left:120px;top:1066.5px;width:1362px;height:21.5px;background:#cbcbcb"></div>

  <!-- overlay image -->
  <div class="abs" style="left:119px;top:590px;width:1382px;height:476.5px;overflow:hidden">
  <div class="abs" style="left:194.7px;top:205px;width:265.5px;height:265.3px;background:#fff;box-shadow:0 0 85px rgba(0,0,0,0.38)"></div>
  <svg class="abs" style="left:194.7px;top:205px" width="265" height="265">
    <defs>
  <linearGradient id="tankg" x1="0" y1="0" x2="0" y2="1">
    <stop offset="0" stop-color="#7c8388"/>
    <stop offset="0.3" stop-color="#737a80"/>
    <stop offset="0.75" stop-color="#62686d"/>
    <stop offset="1" stop-color="#3d4145"/>
  </linearGradient>
  <radialGradient id="shd" cx="0.5" cy="0.5" r="0.5">
    <stop offset="0" stop-color="#000" stop-opacity="0.30"/>
    <stop offset="0.6" stop-color="#000" stop-opacity="0.12"/>
    <stop offset="1" stop-color="#000" stop-opacity="0"/>
  </radialGradient>
  <pattern id="mesh" width="5.5" height="13" patternUnits="userSpaceOnUse" patternTransform="rotate(6)">
    <rect width="5.5" height="13" fill="#c9c9c9"/>
    <path d="M0.8 0 L0.8 13 M0 0.8 L5.5 0.8" stroke="#262626" stroke-width="1.5"/>
  </pattern>
  <filter id="blur3"><feGaussianBlur stdDeviation="6"/></filter>
</defs>
<ellipse cx="165" cy="200" rx="75" ry="26" fill="#000" opacity="0.14" filter="url(#blur3)" transform="rotate(-22 165 200)"/>
<!-- mesh guard -->
<path d="M43.7 9 L176 24.7 L176 118 L112 130 L51.6 141 Z" fill="url(#mesh)"/>
<path d="M43.7 9 L176 24.7 L176 118 L112 130 L51.6 141 Z" fill="none" stroke="#1e1e1e" stroke-width="2.2"/>
<!-- flywheel -->
<ellipse cx="76" cy="76" rx="22" ry="48" fill="none" stroke="#141414" stroke-width="6"/>
<path d="M76 30 L76 122 M55 76 L97 76 M62 42 L92 110 M62 110 L92 42" stroke="#1e1e1e" stroke-width="3.2"/>
<!-- pump head -->
<path d="M98.6 22 L110 17 L150 17 L158 26 L158 121 L118 126 L104 121 L98 100 Z" fill="#111"/>
<rect x="111" y="8" width="26" height="11" fill="#3c3c3c"/>
<path d="M100 36 L156 36 M100 44 L156 44 M100 52 L156 52 M100 60 L156 60" stroke="#2c2c2c" stroke-width="1.6"/>
<path d="M128 70 L156 70 L156 120 L128 122 Z" fill="#1c1c1c"/>
<circle cx="145" cy="88" r="5" fill="#333"/>
<circle cx="142" cy="110" r="2.5" fill="#666"/>
<!-- motor -->
<path d="M156 52 L199 52 L204 60 L206 112 L160 118 L155 70 Z" fill="#181818"/>
<rect x="157" y="50" width="43" height="14" fill="#202020"/>
<path d="M199 64 L215 64" stroke="#222" stroke-width="3"/>
<ellipse cx="203" cy="90" rx="15" ry="21" fill="#151515"/>
<ellipse cx="205" cy="90" rx="9" ry="13" fill="none" stroke="#3a3a3a" stroke-width="2"/>
<circle cx="161" cy="106" r="4.5" fill="#cfd4d8"/>
<circle cx="172" cy="91" r="1.8" fill="#d42020"/>
<!-- base plate -->
<path d="M105 122 L209.6 110 L209.6 129 L121 154.7 L105 134.5 Z" fill="#5c6267"/>
<path d="M121 137 L209.6 120 L209.6 129 L121 154.7 Z" fill="#50565b"/>
<!-- pipe -->
<path d="M105.5 70 L106 106 L84 132 Q66 146 52 148" fill="none" stroke="#b9bcbf" stroke-width="4" stroke-linecap="round" stroke-linejoin="round"/>
<!-- tank -->
<ellipse cx="208" cy="141.4" rx="9" ry="21.6" fill="#6d757b"/>
<path d="M74 144.5 L208 119.8 L208 163 L74 219.5 Z" fill="url(#tankg)"/>
<ellipse cx="74" cy="182" rx="15.5" ry="37.5" fill="#646c73"/>
<path d="M74 144.5 A15.5 37.5 0 0 1 74 219.5" fill="none" stroke="#7d858b" stroke-width="2" opacity="0.7"/>
<path d="M80 152 L206 125" stroke="#8d959b" stroke-width="5" opacity="0.4"/>
<path d="M163 146 L183 142 M163 151 L183 147 M164 158 L184 154 M164 163 L184 159 M165 170 L183 166" stroke="#e9eaeb" stroke-width="2"/>
<circle cx="61" cy="191" r="3.2" fill="#b9c0c6"/>
<path d="M112.3 199 L124 194 L127.2 205 L115 211.5 Z" fill="#e9c32e"/>
<path d="M122 195 L126 194 L128 204 L124 206 Z" fill="#2a9fd8"/>
<!-- base plate front -->
<path d="M119 132 L208 110.4 L208 125 L119 153.5 Z" fill="#5a6166"/>
<rect x="140.6" y="125" width="9.4" height="13.7" fill="#e9c32e" transform="rotate(-10 140.6 125)"/>
<rect x="185" y="113" width="6.7" height="13.5" fill="#e9c32e" transform="rotate(-10 185 113)"/>
<rect x="156" y="120" width="24" height="8" fill="#dfe3e6" transform="rotate(-13 156 120)"/>
<!-- wheel -->
<path d="M118 208 L132 205 L142 228 L130 232 Z" fill="#3a3d40"/>
<ellipse cx="140.5" cy="227.6" rx="16.3" ry="22" fill="#131313"/>
<ellipse cx="142" cy="227.6" rx="9" ry="13" fill="none" stroke="#2e2e2e" stroke-width="2.2"/>
<ellipse cx="181.6" cy="180" rx="5.5" ry="5" fill="#1c1c1c"/>

  </svg>
  </div>

  <!-- footer -->
  <div id="footer"></div>
  <div class="t" style="left:618px;top:1133px;font-size:16.3px;color:#bcc3cc;line-height:19px">© 2019 - VibeRent. All rights reserved. <span style="color:#4c93e0;text-decoration:underline;letter-spacing:0.1px">Privacy Policy</span></div>
</div></div>
</body></html>
